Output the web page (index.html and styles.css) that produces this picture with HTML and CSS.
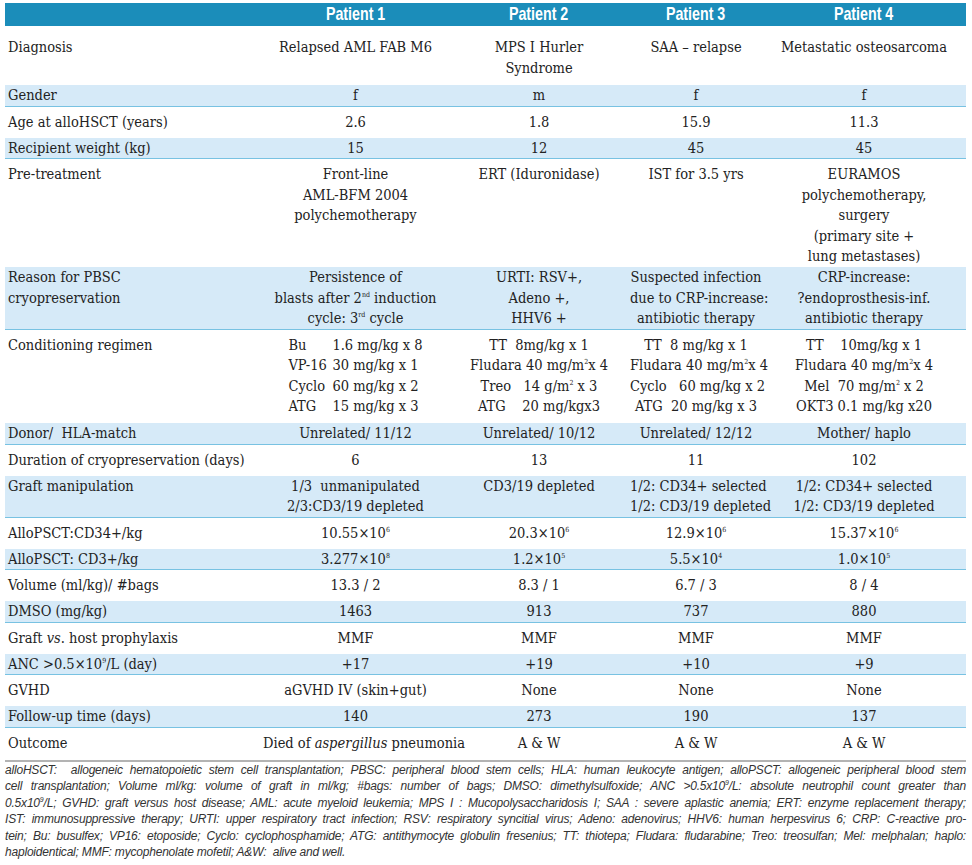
FILE: index.html
```html
<!DOCTYPE html>
<html lang="en">
<head>
<meta charset="utf-8">
<title>Patient characteristics</title>
<link rel="stylesheet" href="styles.css">
</head>
<body>
<div class="page">
<table class="data">
<colgroup>
<col class="c-label"><col class="c-p1"><col class="c-p2"><col class="c-p3"><col class="c-p4">
</colgroup>
<thead>
<tr class="head">
<th></th>
<th><span class="hd">Patient 1</span></th>
<th><span class="hd">Patient 2</span></th>
<th><span class="hd">Patient 3</span></th>
<th><span class="hd">Patient 4</span></th>
</tr>
</thead>
<tbody>
<tr class="diag">
<td class="label">Diagnosis</td>
<td>Relapsed AML FAB M6</td>
<td>MPS I Hurler<br>Syndrome</td>
<td>SAA – relapse</td>
<td>Metastatic osteosarcoma</td>
</tr>
<tr class="band">
<td class="label">Gender</td><td>f</td><td>m</td><td>f</td><td>f</td>
</tr>
<tr>
<td class="label">Age at alloHSCT (years)</td><td>2.6</td><td>1.8</td><td>15.9</td><td>11.3</td>
</tr>
<tr class="band">
<td class="label">Recipient weight (kg)</td><td>15</td><td>12</td><td>45</td><td>45</td>
</tr>
<tr class="pre">
<td class="label">Pre-treatment</td>
<td>Front-line<br>AML-BFM 2004<br>polychemotherapy</td>
<td>ERT (Iduronidase)</td>
<td>IST for 3.5 yrs</td>
<td>EURAMOS<br>polychemotherapy,<br>surgery<br>(primary site +<br>lung metastases)</td>
</tr>
<tr class="band">
<td class="label">Reason for PBSC<br>cryopreservation</td>
<td>Persistence of<br>blasts after 2<sup>nd</sup> induction<br>cycle: 3<sup>rd</sup> cycle</td>
<td>URTI: RSV+,<br>Adeno +,<br>HHV6 +</td>
<td>Suspected infection<br>due to CRP-increase:<br>antibiotic therapy</td>
<td>CRP-increase:<br>?endoprosthesis-inf.<br>antibiotic therapy</td>
</tr>
<tr class="cond">
<td class="label">Conditioning regimen</td>
<td><div class="regimen"><span>Bu</span><span>1.6 mg/kg x 8</span><span>VP-16</span><span>30 mg/kg x 1</span><span>Cyclo</span><span>60 mg/kg x 2</span><span>ATG</span><span>15 mg/kg x 3</span></div></td>
<td>TT&nbsp; 8mg/kg x 1<br>Fludara 40 mg/m<sup>2</sup>x 4<br>Treo&nbsp;&nbsp; 14 g/m<sup>2</sup> x 3<br>ATG&nbsp;&nbsp;&nbsp; 20 mg/kgx3</td>
<td>TT&nbsp; 8 mg/kg x 1<br>Fludara 40 mg/m<sup>2</sup>x 4<br>Cyclo&nbsp;&nbsp; 60 mg/kg x 2<br>ATG&nbsp; 20 mg/kg x 3</td>
<td>TT&nbsp;&nbsp;&nbsp; 10mg/kg x 1<br>Fludara 40 mg/m<sup>2</sup>x 4<br>Mel&nbsp; 70 mg/m<sup>2</sup> x 2<br>OKT3 0.1 mg/kg x20</td>
</tr>
<tr class="band">
<td class="label">Donor/&nbsp; HLA-match</td>
<td>Unrelated/ 11/12</td><td>Unrelated/ 10/12</td><td>Unrelated/ 12/12</td><td>Mother/ haplo</td>
</tr>
<tr>
<td class="label">Duration of cryopreservation (days)</td><td>6</td><td>13</td><td>11</td><td>102</td>
</tr>
<tr class="band">
<td class="label">Graft manipulation</td>
<td>1/3&nbsp; unmanipulated<br>2/3:CD3/19 depleted</td>
<td>CD3/19 depleted</td>
<td>1/2: CD34+ selected<br>1/2: CD3/19 depleted</td>
<td>1/2: CD34+ selected<br>1/2: CD3/19 depleted</td>
</tr>
<tr>
<td class="label">AlloPSCT:CD34+/kg</td>
<td>10.55×10<sup>6</sup></td><td>20.3×10<sup>6</sup></td><td>12.9×10<sup>6</sup></td><td>15.37×10<sup>6</sup></td>
</tr>
<tr class="band">
<td class="label">AlloPSCT: CD3+/kg</td>
<td>3.277×10<sup>8</sup></td><td>1.2×10<sup>5</sup></td><td>5.5×10<sup>4</sup></td><td>1.0×10<sup>5</sup></td>
</tr>
<tr>
<td class="label">Volume (ml/kg)/ #bags</td><td>13.3 / 2</td><td>8.3 / 1</td><td>6.7 / 3</td><td>8 / 4</td>
</tr>
<tr class="band">
<td class="label">DMSO (mg/kg)</td><td>1463</td><td>913</td><td>737</td><td>880</td>
</tr>
<tr>
<td class="label">Graft <i>vs</i>. host prophylaxis</td><td>MMF</td><td>MMF</td><td>MMF</td><td>MMF</td>
</tr>
<tr class="band">
<td class="label">ANC &gt;0.5×10<sup>9</sup>/L (day)</td><td>+17</td><td>+19</td><td>+10</td><td>+9</td>
</tr>
<tr>
<td class="label">GVHD</td><td>aGVHD IV (skin+gut)</td><td>None</td><td>None</td><td>None</td>
</tr>
<tr class="band">
<td class="label">Follow-up time (days)</td><td>140</td><td>273</td><td>190</td><td>137</td>
</tr>
<tr>
<td class="label">Outcome</td><td>Died of <i>aspergillus</i> pneumonia</td><td>A &amp; W</td><td>A &amp; W</td><td>A &amp; W</td>
</tr>
</tbody>
</table>
<div class="rule"></div>
<div class="notes">
<div class="ln">alloHSCT:&nbsp; allogeneic hematopoietic stem cell transplantation; PBSC: peripheral blood stem cells; HLA: human leukocyte antigen; alloPSCT: allogeneic peripheral blood stem</div>
<div class="ln">cell transplantation; Volume ml/kg: volume of graft in ml/kg; #bags: number of bags; DMSO: dimethylsulfoxide; ANC &gt;0.5x10<sup>9</sup>/L: absolute neutrophil count greater than</div>
<div class="ln">0.5x10<sup>9</sup>/L; GVHD: graft versus host disease; AML: acute myeloid leukemia; MPS I : Mucopolysaccharidosis I; SAA : severe aplastic anemia; ERT: enzyme replacement therapy;</div>
<div class="ln">IST: immunosuppressive therapy; URTI: upper respiratory tract infection; RSV: respiratory syncitial virus; Adeno: adenovirus; HHV6: human herpesvirus 6; CRP: C-reactive pro-</div>
<div class="ln">tein; Bu: busulfex; VP16: etoposide; Cyclo: cyclophosphamide; ATG: antithymocyte globulin fresenius; TT: thiotepa; Fludara: fludarabine; Treo: treosulfan; Mel: melphalan; haplo:</div>
<div class="ln last">haploidentical; MMF: mycophenolate mofetil; A&amp;W:&nbsp; alive and well.</div>
</div>
</div>
</body>
</html>
```
FILE: styles.css
```css
html, body {
  margin: 0;
  padding: 0;
  background: #ffffff;
}

.page {
  padding: 3px 6px 0 5px;
  width: 961px;
}

.data {
  border-collapse: collapse;
  table-layout: fixed;
  width: 961px;
  font-family: "DejaVu Serif", "Liberation Serif", serif;
  font-stretch: condensed;
  font-size: 14.5px;
  line-height: 20.5px;
  color: #222222;
}

.c-label { width: 258px; }
.c-p1 { width: 185px; }
.c-p2 { width: 182px; }
.c-p3 { width: 132px; }
.c-p4 { width: 204px; }

.data th,
.data td {
  padding: 5px 0 5.5px 0;
  text-align: center;
  vertical-align: top;
  white-space: nowrap;
  font-weight: normal;
}

.data td.label {
  text-align: left;
  padding-left: 3px;
}

.head th {
  background: #1b8dba;
  height: 22px;
  padding: 0;
  line-height: 22px;
  vertical-align: middle;
}

.hd {
  display: inline-block;
  font-family: "Liberation Sans", Arial, sans-serif;
  font-weight: bold;
  font-size: 19px;
  color: #ffffff;
  transform: scaleX(0.75);
}

.band td {
  background: #d6eaf8;
  border-bottom: 1px solid #78c2e2;
  padding: 0;
}

.band td.label {
  padding-left: 3px;
}

.diag td {
  padding-top: 11px;
  padding-bottom: 7px;
}

.pre td {
  padding-top: 5px;
  padding-bottom: 0.5px;
}

.cond td {
  padding-top: 5px;
  padding-bottom: 6.5px;
}

.regimen {
  display: inline-grid;
  grid-template-columns: 44px auto;
  text-align: left;
}

sup {
  font-size: 7px;
  line-height: 0;
  vertical-align: 6px;
}

.rule {
  height: 0;
  border-top: 2px solid #b3b3b3;
  margin-top: 1px;
}

.notes {
  font-family: "Liberation Sans", Arial, sans-serif;
  font-style: italic;
  font-size: 12px;
  letter-spacing: -0.2px;
  line-height: 16.6px;
  color: #333333;
}

.notes .ln {
  text-align: justify;
  text-align-last: justify;
}

.notes .ln.last {
  text-align-last: left;
}

.notes sup {
  font-size: 7px;
  vertical-align: 5px;
}
```
